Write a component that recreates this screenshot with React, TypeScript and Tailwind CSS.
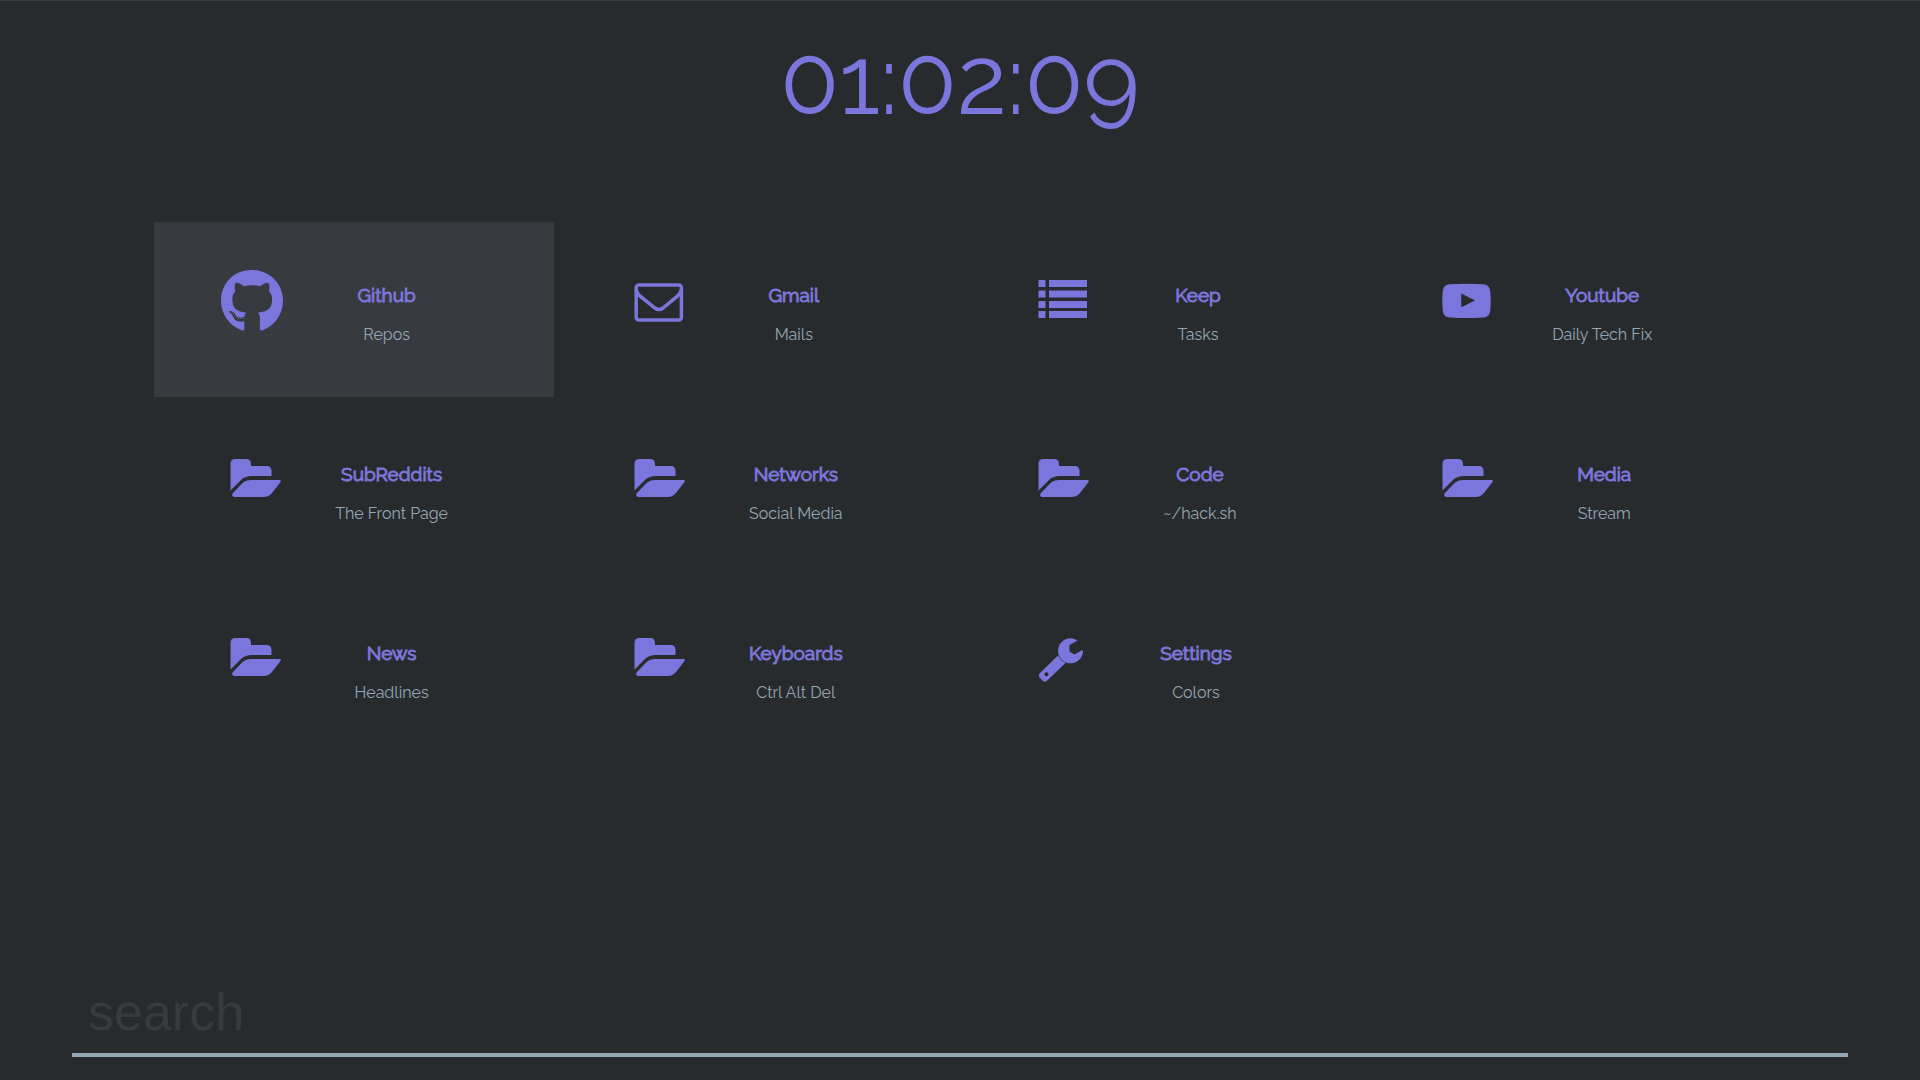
import React from "react";
import { FaGithub } from "react-icons/fa";

type IconName = "github" | "mail" | "list" | "youtube" | "folder" | "wrench";

type Tile = { title: string; subtitle: string; icon: IconName; active?: boolean };

const tiles: Tile[] = [
  { title: "Github", subtitle: "Repos", icon: "github", active: true },
  { title: "Gmail", subtitle: "Mails", icon: "mail" },
  { title: "Keep", subtitle: "Tasks", icon: "list" },
  { title: "Youtube", subtitle: "Daily Tech Fix", icon: "youtube" },
  { title: "SubReddits", subtitle: "The Front Page", icon: "folder" },
  { title: "Networks", subtitle: "Social Media", icon: "folder" },
  { title: "Code", subtitle: "~/hack.sh", icon: "folder" },
  { title: "Media", subtitle: "Stream", icon: "folder" },
  { title: "News", subtitle: "Headlines", icon: "folder" },
  { title: "Keyboards", subtitle: "Ctrl Alt Del", icon: "folder" },
  { title: "Settings", subtitle: "Colors", icon: "wrench" },
];

function Icon({ name }: { name: IconName }) {
  if (name === "github") {
    return <FaGithub className="h-16 w-16 shrink-0" aria-hidden="true" />;
  }
  if (name === "mail") {
    return (
      <svg className="h-12 w-[50px] shrink-0" viewBox="0 0 50 48" fill="none" stroke="currentColor" strokeWidth="3.5" aria-hidden="true">
        <rect x="2.2" y="7" width="45.200" height="35" rx="2.6" />
        <path d="M2.500 12c0 2 1 4 3 5.600l15.500 12.400q4 3 8 0L44 17.600c2-1.600 3-3.600 3-5.600" />
      </svg>
    );
  }
  if (name === "list") {
    return (
      <svg className="h-12 w-[50px] shrink-0" viewBox="0 0 50 48" fill="currentColor" aria-hidden="true">
        <path d="M0.500 2h7v7h-7zM11 2h38v7H11zM0.500 12.500h7v7h-7zM11 12.500h38v7H11zM0.500 23h7v7h-7zM11 23h38v7H11zM0.500 33h7v7h-7zM11 33h38v7H11z" />
      </svg>
    );
  }
  if (name === "youtube") {
    return (
      <svg className="h-12 w-[50px] shrink-0" viewBox="0 0 50 48" fill="currentColor" aria-hidden="true">
        <path
          fillRule="evenodd"
          d="M8 6.300Q24.500 5.300 41 6.300Q47.500 6.600 48.200 13Q49.200 23 48.200 33Q47.500 39 41 39.500Q24.500 40.500 8 39.500Q1.500 39 0.800 33Q-0.200 23 0.800 13Q1.500 6.600 8 6.300ZM19.300 15.500V29.300L33 22.400Z"
        />
      </svg>
    );
  }
  if (name === "folder") {
    return (
      <svg className="h-12 w-[52px] shrink-0" viewBox="0 0 52 48" fill="currentColor" aria-hidden="true">
        <path d="M0.500 33.500V7Q0.500 2 5.500 2H16Q21 2 21 7V9H36.500Q41.500 9 41.500 14V19H22Q15.500 19 11.500 22.500Z" />
        <path d="M3 36L12.500 26Q16 23 21 23H50Q51.500 23.500 50.500 25L42 36Q38.500 40 34 40H4.500Q1.500 39.500 2.300 37Z" />
      </svg>
    );
  }
  return (
    <svg className="h-12 w-12 shrink-0" viewBox="0 0 48 48" fill="currentColor" aria-hidden="true">
      <path d="M39.500 4.500A12.500 12.500 0 1 0 45 15.500Q45 13.500 43.500 14.500L36.500 18.500L31.500 15.500V9L39.500 4.500Z" />
      <path
        fillRule="evenodd"
        d="M20 19.500L1.500 37.500Q0.300 39.500 1.500 41.500L5 45Q7 46.500 8.700 45L27.500 27Q22.500 24.500 20 19.500ZM8.500 36.300a2 2 0 1 1 0 4a2 2 0 1 1 0-4Z"
      />
    </svg>
  );
}

function TileLink({ tile }: { tile: Tile }) {
  return (
    <a
      href="#"
      className={
        tile.active
          ? "flex h-[175px] items-start gap-4 bg-[#373a3e] pt-[47px] pl-[66px]"
          : "flex h-[175px] items-start gap-6 pt-14 pl-[76px]"
      }
    >
      <Icon name={tile.icon} />
      <span className={tile.active ? "mt-[10px] flex w-[174px] flex-col gap-3 text-center" : "mt-px flex w-[172px] flex-col gap-3 text-center"}>
        <span className="text-[19px] leading-8 font-normal [-webkit-text-stroke:1px_currentColor]">{tile.title}</span>
        <span className="text-base leading-6 text-[#93a7b3]">{tile.subtitle}</span>
      </span>
    </a>
  );
}

export default function App() {
  return (
    <div className="flex min-h-screen flex-col border-t border-[#3e3f3b] bg-[#282b2e] font-['Raleway','Lato',sans-serif] text-[#7b76db]">
      <header className="pt-6 text-center">
        <time className="block text-[96px] leading-[110px]">01:02:09</time>
      </header>
      <nav aria-label="Bookmarks" className="mx-auto mt-[87px] grid w-[84%] grid-cols-4 gap-1">
        {tiles.map((tile) => (
          <TileLink key={tile.title} tile={tile} />
        ))}
      </nav>
      <form className="mt-auto px-18 pb-[23px]" onSubmit={(e) => e.preventDefault()}>
        <input
          type="text"
          aria-label="Search"
          placeholder="search"
          className="block h-[86px] w-full border-b-4 border-[#93a7b3] bg-transparent px-4 font-['Liberation_Sans',sans-serif] text-[52px] text-[#93a7b3] outline-none placeholder:text-[#373a3e]"
        />
      </form>
    </div>
  );
}
